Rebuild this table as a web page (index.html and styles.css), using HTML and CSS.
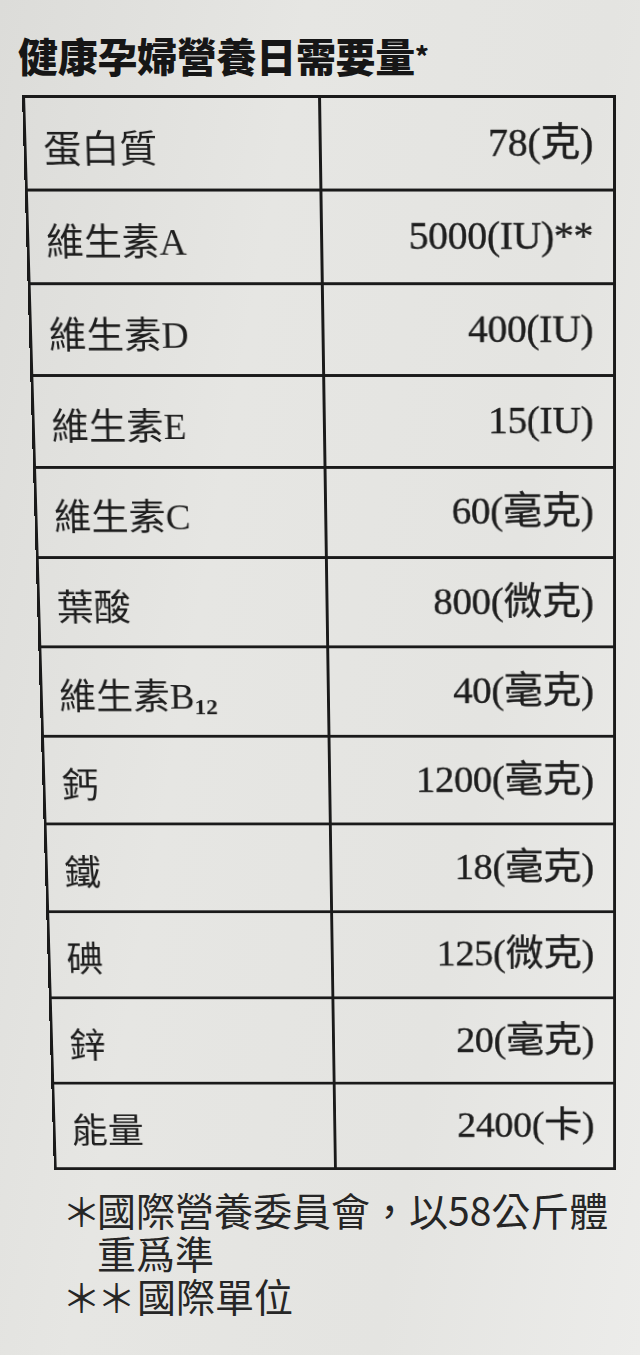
FILE: index.html
```html
<!DOCTYPE html>
<html lang="zh-Hant">
<head>
<meta charset="utf-8">
<title>健康孕婦營養日需要量</title>
<link rel="stylesheet" href="styles.css">
</head>
<body>
<main class="page">
  <h1 class="title">健康孕婦營養日需要量<span class="star">*</span></h1>
  <div class="table-wrap">
    <table class="nutri">
      <colgroup><col class="c1"><col class="c2"></colgroup>
      <tbody>
        <tr><td class="name">蛋白質</td><td class="val">78(克)</td></tr>
        <tr><td class="name">維生素A</td><td class="val">5000(IU)**</td></tr>
        <tr><td class="name">維生素D</td><td class="val">400(IU)</td></tr>
        <tr><td class="name">維生素E</td><td class="val">15(IU)</td></tr>
        <tr><td class="name">維生素C</td><td class="val">60(毫克)</td></tr>
        <tr><td class="name">葉酸</td><td class="val">800(微克)</td></tr>
        <tr><td class="name">維生素B<sub class="sub">12</sub></td><td class="val">40(毫克)</td></tr>
        <tr><td class="name">鈣</td><td class="val">1200(毫克)</td></tr>
        <tr><td class="name">鐵</td><td class="val">18(毫克)</td></tr>
        <tr><td class="name">碘</td><td class="val">125(微克)</td></tr>
        <tr><td class="name">鋅</td><td class="val">20(毫克)</td></tr>
        <tr><td class="name">能量</td><td class="val">2400(卡)</td></tr>
      </tbody>
    </table>
  </div>
  <div class="notes">
    <p class="note"><span class="mark m1">＊</span><span class="ntext">國際營養委員會，以58公斤體<br>重爲準</span></p>
    <p class="note"><span class="mark m2">＊＊</span><span class="ntext">國際單位</span></p>
  </div>
</main>
</body>
</html>
```

FILE: styles.css
```css
html, body {
  margin: 0;
  padding: 0;
}

body {
  width: 640px;
  height: 1355px;
  overflow: hidden;
  color: #1e1e1e;
  background: #e2e2df;
  background-image: linear-gradient(100deg, #dcdcd9 0%, #e6e6e3 35%, #e4e4e1 70%, #ececea 100%);
}

.page {
  padding: 35px 0 0 18px;
}

.title {
  margin: 0;
  font-family: "Noto Sans CJK TC", "Noto Sans CJK SC", sans-serif;
  font-weight: 900;
  font-size: 40px;
  line-height: 40px;
  letter-spacing: -0.3px;
  color: #161616;
}

.star {
  font-size: 26px;
  vertical-align: top;
  letter-spacing: 0;
}

.table-wrap {
  margin: 20px 0 0 4px;
  height: 1078px;
}

.nutri {
  width: 591px;
  height: 1136px;
  border-collapse: collapse;
  table-layout: fixed;
  border: 3px solid #1a1a1a;
  transform-origin: right top;
  transform: matrix3d(1, 0, 0, 0, 0, 1, 0, 0.00005, 0, 0, 1, 0, 0, 0, 0, 1);
}

.c1 { width: 296px; }
.c2 { width: 295px; }

.nutri td {
  border: 3px solid #1a1a1a;
  padding: 0;
  font-family: "Liberation Serif", "Noto Sans CJK TC", serif;
  font-weight: 400;
  vertical-align: middle;
  white-space: nowrap;
}

.name {
  padding: 10px 0 0 17px !important;
  font-size: 38px;
  line-height: 40px;
}

.val {
  text-align: right;
  padding: 0 20px 2px 0 !important;
  font-size: 40px;
  line-height: 40px;
  letter-spacing: -0.3px;
  -webkit-text-stroke: 0.4px #1e1e1e;
}

.sub {
  font-size: 24px;
  font-weight: 700;
  vertical-align: -6px;
  line-height: 0;
}

.notes {
  margin: 15px 0 0 44px;
  font-family: "Noto Sans CJK TC", "Noto Sans CJK SC", sans-serif;
  font-weight: 400;
  font-size: 39px;
  line-height: 43px;
  color: #262626;
}

.note {
  margin: 0;
  display: flex;
  align-items: flex-start;
}

.mark {
  flex: none;
}

.m1 {
  width: 35px;
  letter-spacing: -4px;
}

.m2 {
  width: 75px;
  letter-spacing: -4px;
}
```
